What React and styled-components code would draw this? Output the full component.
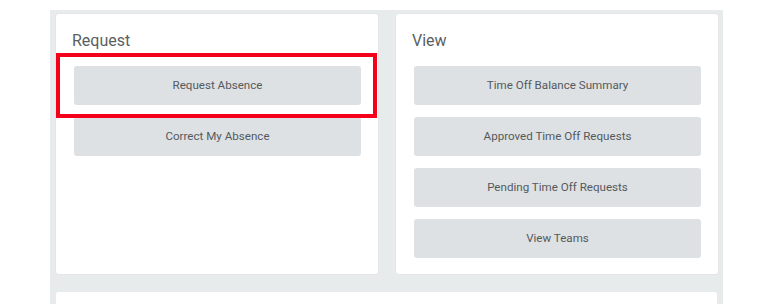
import React from "react";
import styled, { createGlobalStyle } from "styled-components";

const GlobalStyle = createGlobalStyle`
  body {
    margin: 0;
    background: #ffffff;
    font-family: Roboto, "Liberation Sans", sans-serif;
  }
`;

const requestItems = ["Request Absence", "Correct My Absence"];
const viewItems = [
  "Time Off Balance Summary",
  "Approved Time Off Requests",
  "Pending Time Off Requests",
  "View Teams",
];

const App = () => {
  return (
    <>
      <GlobalStyle />
      <Page>
        <Board>
          <Columns>
            <Card>
              <CardTitle>Request</CardTitle>
              <ButtonList>
                {requestItems.map((item) => (
                  <ActionButton key={item}>{item}</ActionButton>
                ))}
              </ButtonList>
              <Highlight />
            </Card>
            <Card>
              <CardTitle>View</CardTitle>
              <ButtonList>
                {viewItems.map((item) => (
                  <ActionButton key={item}>{item}</ActionButton>
                ))}
              </ButtonList>
            </Card>
          </Columns>
          <BottomCard />
        </Board>
      </Page>
    </>
  );
};

const Page = styled.div`
  width: 768px;
  height: 304px;
  overflow: hidden;
  padding: 10px 0 0 50px;
  box-sizing: border-box;
`;

const Board = styled.div`
  width: 673px;
  min-height: 320px;
  background: #e8ebec;
  padding: 4px 6px 0 6px;
  box-sizing: border-box;
  display: flex;
  flex-direction: column;
  gap: 18px;
`;

const Columns = styled.div`
  display: grid;
  grid-template-columns: 322px 322px;
  gap: 18px;
`;

const Card = styled.div`
  position: relative;
  background: #ffffff;
  border-radius: 3px;
  height: 260px;
  box-sizing: border-box;
  padding: 17px 17px 17px 18px;
  box-shadow: 0 0 0 1px rgba(0, 0, 0, 0.02);
`;

const CardTitle = styled.h2`
  margin: 0 0 0 -2px;
  font-size: 16px;
  font-weight: 400;
  line-height: 20px;
  color: #5a5f63;
`;

const ButtonList = styled.div`
  display: flex;
  flex-direction: column;
  gap: 12px;
  margin-top: 15px;
`;

const ActionButton = styled.button`
  height: 39px;
  width: 100%;
  border: none;
  border-radius: 3px;
  background: #dde1e4;
  color: #55595c;
  font-family: Roboto, "Liberation Sans", sans-serif;
  font-size: 11.6px;
  padding: 0 0 2px;
  cursor: pointer;
`;

const Highlight = styled.div`
  position: absolute;
  left: 0;
  top: 39px;
  width: 321px;
  height: 65px;
  border: 4px solid #f5001b;
  box-sizing: border-box;
  pointer-events: none;
`;

const BottomCard = styled.div`
  height: 40px;
  background: #ffffff;
  border-radius: 3px;
`;

export default App;
